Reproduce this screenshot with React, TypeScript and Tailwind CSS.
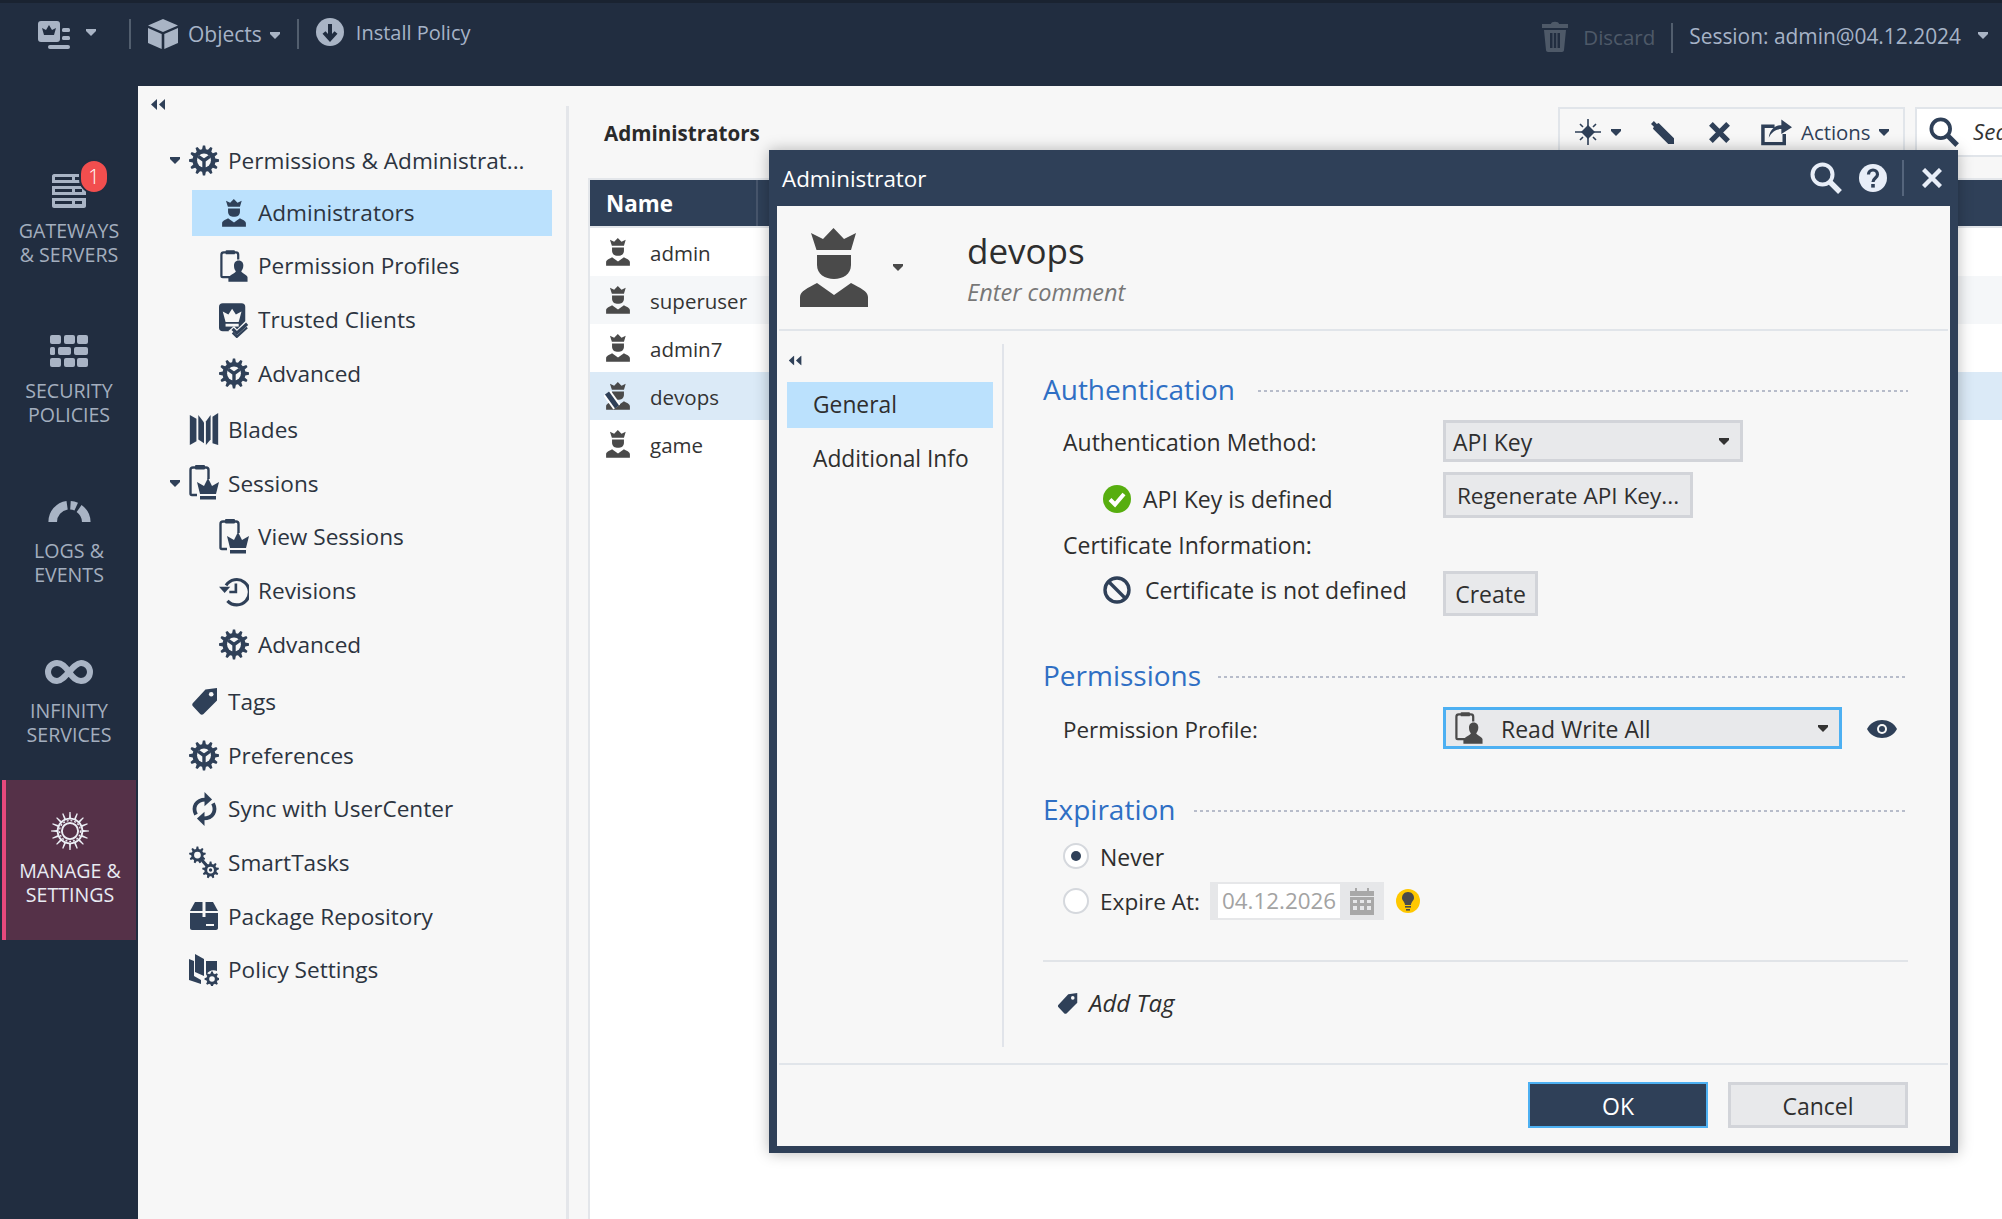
import React from "react";

const NAVY = "#2f4058";

function gearPath(cx: number, cy: number, ro: number, ri: number, n: number, w = 0.32) {
  const pts: string[] = [];
  const step = (Math.PI * 2) / n;
  for (let i = 0; i < n; i++) {
    const a = i * step - Math.PI / 2;
    const p = (r: number, t: number) => `${(cx + r * Math.cos(t)).toFixed(2)} ${(cy + r * Math.sin(t)).toFixed(2)}`;
    pts.push(p(ri, a - step * 0.5), p(ri, a - step * w), p(ro, a - step * w * 0.45), p(ro, a + step * w * 0.45), p(ri, a + step * w));
  }
  return "M" + pts.join("L") + "Z";
}

function Crown({ c = NAVY, className = "" }: { c?: string; className?: string }) {
  return (
    <svg viewBox="0 0 68 80" className={className} fill={c}>
      <path d="M33.5 0 L44 11 L56 5 L51 22 H16.5 L11 5 L23 11 Z" />
      <path d="M17 27 H51 V37 C51 46 43 51 34 51 C25 51 17 46 17 37 Z" />
      <path d="M0 79 V69 C0 63 8 60 17 55 L34 67 L51 55 C60 60 68 63 68 69 V79 Z" />
    </svg>
  );
}

function Gear({ className = "" }: { className?: string }) {
  return (
    <svg viewBox="0 0 32 34" className={className}>
      <path d={gearPath(16, 17, 16, 12.2, 12)} fill={NAVY} />
      <circle cx="16" cy="17" r="7.4" fill="#f7f7f7" />
      <path d="M16 17 L9.8 12.6 M16 17 L22.2 12.6 M16 17 V25" stroke={NAVY} strokeWidth="3.6" fill="none" />
    </svg>
  );
}

function Profile({ c = NAVY, className = "" }: { c?: string; className?: string }) {
  return (
    <svg viewBox="0 0 30 34" className={className}>
      <path d="M11 29 H3 C2 29 1.5 28.4 1.5 27.5 V5 C1.5 3.5 2.5 2.5 4 2.5 H17 C18.5 2.5 19.5 3.5 19.5 5 V10" fill="none" stroke={c} strokeWidth="2.4" />
      <rect x="6" y="0" width="10" height="4.5" rx="1" fill={c} />
      <path d="M20 11 C23.5 11 25 13.5 25 16.5 C25 19 24 21 22.8 22.5 C23 24.5 29 26 29.5 29 V34 H9 V29.5 C10 26.5 16.5 25 17 22.5 C15.5 21 15 19 15 16.5 C15 13.5 16.5 11 20 11 Z" fill={c} />
    </svg>
  );
}

function SessionIcon({ className = "" }: { className?: string }) {
  return (
    <svg viewBox="0 0 30 36" className={className} fill={NAVY}>
      <path d="M8 30 H3 C2 30 1.5 29.4 1.5 28.5 V5 C1.5 3.5 2.5 2.5 4 2.5 H17 C18.5 2.5 19.5 3.5 19.5 5 V14" fill="none" stroke={NAVY} strokeWidth="2.4" />
      <rect x="6" y="0" width="10" height="4.5" rx="1" />
      <path d="M19 13 L23 21 L30 17 L27 29 H11 L8 17 L15 21 Z" />
      <rect x="11" y="31" width="16" height="3.5" />
    </svg>
  );
}

function Trusted({ className = "" }: { className?: string }) {
  return (
    <svg viewBox="0 0 32 36" className={className}>
      <rect x="0" y="0" width="28" height="30" rx="4" fill={NAVY} />
      <path d="M14 6 L18 12 L24 9 L21 20 H7 L4 9 L10 12 Z" fill="#f7f7f7" />
      <rect x="7" y="22" width="14" height="3" fill="#f7f7f7" />
      <path d="M13 27 L19 34 L31 22" fill="none" stroke="#f7f7f7" strokeWidth="8" />
      <path d="M14.5 27.5 L19 32 L30 22" fill="none" stroke={NAVY} strokeWidth="3.4" />
      <path d="M14.5 31.5 L19 36 L30 26" fill="none" stroke={NAVY} strokeWidth="2.4" />
    </svg>
  );
}

function Blades({ className = "" }: { className?: string }) {
  return (
    <svg viewBox="0 0 30 36" className={className} fill={NAVY}>
      <path d="M0 2 L7 6 V30 L0 34 Z" />
      <path d="M9 0 L15 8 V30 L9 26 Z" transform="translate(0 2)" />
      <path d="M17 9 L22 2 V28 L17 34 Z" />
      <path d="M24 4 L30 0 V34 L24 32 Z" />
    </svg>
  );
}

function Revisions({ className = "" }: { className?: string }) {
  return (
    <svg viewBox="0 0 32 32" className={className} fill="none" stroke={NAVY}>
      <path d="M7.5 10 A13.5 13.5 0 1 1 9 26.5" strokeWidth="3.4" />
      <path d="M0 12.5 H12 L6 19 Z" fill={NAVY} stroke="none" transform="translate(0 -1)" />
      <path d="M18 8 V17 H11" strokeWidth="2.8" />
    </svg>
  );
}

function Tag({ c = NAVY, className = "" }: { c?: string; className?: string }) {
  return (
    <svg viewBox="0 0 26 28" className={className}>
      <path d="M26 0 V13 L12 27 C11 28 9.5 28 8.5 27 L1 19 C0 18 0 16.5 1 15.5 L14 1.5 Z" fill={c} />
      <circle cx="20" cy="6.5" r="2.4" fill="#f7f7f7" />
    </svg>
  );
}

function SyncIcon({ className = "" }: { className?: string }) {
  return (
    <svg viewBox="0 0 26 36" className={className} fill="none" stroke={NAVY} strokeWidth="4">
      <path d="M4 24 C0 16 4 8 14 8" />
      <path d="M22 12 C26 20 22 28 12 28" />
      <path d="M13 0 L21 8 L13 15 Z" fill={NAVY} stroke="none" />
      <path d="M13 21 L5 28 L13 36 Z" fill={NAVY} stroke="none" />
    </svg>
  );
}

function SmartTasks({ className = "" }: { className?: string }) {
  return (
    <svg viewBox="0 0 32 34" className={className}>
      <path d="M9 9 L23 25" stroke={NAVY} strokeWidth="3.4" />
      <path d={gearPath(9, 9, 9, 6.6, 9)} fill={NAVY} />
      <circle cx="9" cy="9" r="3.6" fill="#f7f7f7" />
      <path d={gearPath(23, 25, 9, 6.6, 9)} fill={NAVY} />
      <circle cx="23" cy="25" r="3.6" fill="#f7f7f7" />
      <circle cx="23" cy="25" r="1.8" fill={NAVY} />
    </svg>
  );
}

function PackageIcon({ className = "" }: { className?: string }) {
  return (
    <svg viewBox="0 0 28 28" className={className} fill={NAVY}>
      <path d="M5 0 H12.5 V9 H0 Z" />
      <path d="M15.5 0 H23 L28 9 H15.5 Z" />
      <path d="M0 11 H12.5 V15 H15.5 V11 H28 V26 C28 27 27 28 26 28 H2 C1 28 0 27 0 26 Z" />
      <rect x="16" y="22" width="8" height="2" fill="#f7f7f7" />
    </svg>
  );
}

function PolicySettings({ className = "" }: { className?: string }) {
  return (
    <svg viewBox="0 0 30 32" className={className} fill={NAVY}>
      <path d="M0 5 L5 7 V22 L12 26 V30 L0 26 Z" />
      <path d="M6 0 L15 5 V22 L6 18 Z" />
      <path d="M17 7 H28 V17 C24 15 19 17 17 21 Z" />
      <path d={gearPath(23, 25, 7.5, 5.6, 8)} />
      <circle cx="23" cy="25" r="2.8" fill="#f7f7f7" />
    </svg>
  );
}

function Caret({ c = NAVY, className = "" }: { c?: string; className?: string }) {
  return (
    <svg viewBox="0 0 10 7" className={`w-[10px] h-[7px] shrink-0 ${className}`} fill={c}>
      <path d="M0 0 H10 V2 L5 7 L0 2 Z" />
    </svg>
  );
}

function Collapse({ className = "" }: { className?: string }) {
  return (
    <svg viewBox="0 0 15 11" className={`w-[15px] h-[11px] ${className}`} fill={NAVY}>
      <path d="M6 0 V11 L0 5.5 Z" />
      <path d="M14 0 V11 L8 5.5 Z" />
    </svg>
  );
}

function SearchIcon({ c, className = "" }: { c: string; className?: string }) {
  return (
    <svg viewBox="0 0 32 32" className={className} fill="none" stroke={c}>
      <circle cx="12.5" cy="12.5" r="10" strokeWidth="4" />
      <path d="M19.5 19.5 L30 30" strokeWidth="5.4" />
    </svg>
  );
}

function TreeRow({ level = 1, icon, label, caret = false, selected = false }: { level?: 1 | 2; icon: React.ReactNode; label: string; caret?: boolean; selected?: boolean }) {
  return (
    <div className={`h-[53.7px] flex items-center ${level === 2 ? "pl-[54px]" : "pl-[32px]"}`}>
      <div className={`flex items-center h-[46px] ${level === 2 ? (selected ? "w-[360px] bg-[#bbe1fd] pl-[27px]" : "pl-[27px]") : ""}`}>
        {level === 1 && <div className="w-[19px] flex">{caret && <Caret />}</div>}
        <div className="w-[30px] h-[36px] flex items-center justify-center shrink-0">{icon}</div>
        <span className="ml-[9px] pt-[1px] text-[#2c3440] text-[22.6px] whitespace-nowrap">{label}</span>
      </div>
    </div>
  );
}

function SideItem({ icon, lines, active = false }: { icon: React.ReactNode; lines: [string, string]; active?: boolean }) {
  return (
    <div className={`h-[160px] flex flex-col items-center pt-[22px] text-[19.6px] leading-[24px] ${active ? "ml-[2px] mr-[2px] border-l-4 border-[#e6497c] bg-[#553148] text-[#e8ebf3] pr-[2px]" : "text-[#a3aebe]"}`}>
      <div className="h-[57px] flex items-center justify-center">{icon}</div>
      <div className="text-center whitespace-nowrap">{lines[0]}</div>
      <div className="text-center whitespace-nowrap">{lines[1]}</div>
    </div>
  );
}

function Heading({ title, lineLeft }: { title: string; lineLeft: number }) {
  return (
    <div className="h-[46px] flex items-center">
      <span className="text-[#2f6fc4] text-[28px] pb-[3px] whitespace-nowrap" style={{ width: lineLeft }}>{title}</span>
      <div className="flex-1 h-[2px] mt-[2px] bg-[repeating-linear-gradient(90deg,#b7bcca_0_3px,transparent_3px_6px)]" />
    </div>
  );
}

function Btn({ children, className = "" }: { children: React.ReactNode; className?: string }) {
  return (
    <div className={`border-[3px] border-[#d2d4d9] bg-[#e8e9eb] flex items-center justify-center text-[#2f2f2f] whitespace-nowrap ${className}`}>{children}</div>
  );
}

const rows = [
  { n: "admin", bg: "bg-white" },
  { n: "superuser", bg: "bg-[#f5f7f9]" },
  { n: "admin7", bg: "bg-white" },
  { n: "devops", bg: "bg-[#dbeaf7]", pencil: true },
  { n: "game", bg: "bg-white" },
];

export default function App() {
  return (
    <div className="relative w-[2002px] h-[1219px] overflow-hidden bg-[#212d40] text-[22.4px] leading-none" style={{ fontFamily: '"Open Sans", "Noto Sans", sans-serif' }}>
      {/* top bar */}
      <header className="h-[86px] border-t-[3px] border-[#1a2331] flex text-[#a6b3c7] text-[20.5px]">
        <div className="flex items-start pt-[16px] pl-[38px]">
          <svg viewBox="0 0 32 28" className="w-[32px] h-[28px] mt-[2px]" fill="#a9b4c5">
            <rect x="0" y="0" width="22" height="21" rx="3" />
            <path d="M11 4 L14 9 L18 7 L16 14 H6 L4 7 L8 9 Z" fill="#212d40" />
            <rect x="24" y="7" width="8" height="4" rx="1.5" />
            <rect x="24" y="15" width="8" height="4" rx="1.5" />
            <rect x="10" y="24" width="22" height="4" rx="2" />
          </svg>
          <Caret c="#a9b4c5" className="ml-[16px] mt-[10px]" />
          <div className="w-[2px] h-[30px] bg-[#525e6e] ml-[33px]" />
          <svg viewBox="0 0 30 30" className="w-[30px] h-[30px] ml-[17px]" fill="#a9b4c5">
            <path d="M15 0 L30 6.5 L15 13 L0 6.5 Z" />
            <path d="M0 9 L13.7 15 V30 L0 24 Z" />
            <path d="M30 9 L16.3 15 V30 L30 24 Z" />
          </svg>
          <span className="ml-[10px] mt-[5px] text-[21px]">Objects</span>
          <Caret c="#a9b4c5" className="ml-[8px] mt-[13px]" />
          <div className="w-[2px] h-[30px] bg-[#525e6e] ml-[17px]" />
          <svg viewBox="0 0 28 28" className="w-[28px] h-[28px] ml-[17px] -mt-[1px]">
            <circle cx="14" cy="14" r="14" fill="#a9b4c5" />
            <path d="M14 6 V20 M8 14.5 L14 21 L20 14.5" stroke="#212d40" strokeWidth="4" fill="none" />
          </svg>
          <span className="ml-[12px] mt-[4px] text-[20px]">Install Policy</span>
        </div>
        <div className="ml-auto flex items-start pt-[17px]">
          <svg viewBox="0 0 26 32" className="w-[26px] h-[32px]" fill="#4e5968">
            <path d="M9 4 C9 1 17 1 17 4 H26 V8 H0 V4 Z" />
            <path d="M2 10 H24 L22 30 C22 31 21 32 20 32 H6 C5 32 4 31 4 30 Z M8 13 V28 H10.5 V13 Z M11.8 13 V28 H14.2 V13 Z M15.5 13 V28 H18 V13 Z" fillRule="evenodd" />
          </svg>
          <span className="ml-[15px] mt-[7px] text-[#4e5968]">Discard</span>
          <div className="w-[2px] h-[30px] bg-[#525e6e] ml-[16px] mt-[3px]" />
          <span className="ml-[16px] mt-[6px] text-[20.9px] text-[#a6b3c7]">Session: admin@04.12.2024</span>
          <Caret c="#a9b4c5" className="ml-[17px] mt-[12px] mr-[14px]" />
        </div>
      </header>

      <div className="flex h-[1133px]">
        {/* sidebar */}
        <aside className="w-[138px] shrink-0 pt-[54px]">
          <div className="relative">
            <SideItem
              lines={["GATEWAYS", "& SERVERS"]}
              icon={
                <svg viewBox="0 0 34 34" className="w-[34px] h-[34px]" fill="#a9b4c5">
                  <path fillRule="evenodd" d="M0 2 C0 1 1 0 2 0 H32 C33 0 34 1 34 2 V9 H0 Z M3 3 V6 H20 V3 Z M23 3 V6 H30 V3 Z" />
                  <path fillRule="evenodd" d="M0 12 H34 V21 H0 Z M3 15 V18 H20 V15 Z M23 15 V18 H30 V15 Z" />
                  <path fillRule="evenodd" d="M0 24 H34 V32 C34 33 33 34 32 34 H2 C1 34 0 33 0 32 Z M3 27 V30 H20 V27 Z M23 27 V30 H30 V27 Z" />
                </svg>
              }
            />
            <div className="absolute left-[79px] top-[19px] w-[30px] h-[35px] rounded-full bg-[#f24e4e] border-2 border-[#212d40] flex items-center justify-center text-white text-[20px] font-light">1</div>
          </div>
          <SideItem
            lines={["SECURITY", "POLICIES"]}
            icon={
              <svg viewBox="0 0 38 32" className="w-[38px] h-[32px]" fill="#a9b4c5">
                <rect x="0" y="0" width="11" height="9" rx="2" /><rect x="14" y="0" width="11" height="9" rx="2" /><rect x="27" y="0" width="11" height="9" rx="2" />
                <rect x="0" y="12" width="5" height="8" rx="1.5" /><rect x="8" y="12" width="13" height="8" rx="2" /><rect x="24" y="12" width="14" height="8" rx="2" />
                <rect x="0" y="23" width="11" height="9" rx="2" /><rect x="14" y="23" width="11" height="9" rx="2" /><rect x="27" y="23" width="11" height="9" rx="2" />
              </svg>
            }
          />
          <SideItem
            lines={["LOGS &", "EVENTS"]}
            icon={
              <svg viewBox="0 0 44 24" className="w-[43px] h-[23px]" fill="none" stroke="#a9b4c5" strokeWidth="9">
                <path d="M4.5 24 A17.5 17.5 0 0 1 19.5 6.5" />
                <path d="M23 6.5 A17.5 17.5 0 0 1 29 8" />
                <path d="M32 10 A17.5 17.5 0 0 1 39.5 24" />
              </svg>
            }
          />
          <SideItem
            lines={["INFINITY", "SERVICES"]}
            icon={
              <svg viewBox="0 0 48 24" className="w-[48px] h-[24px] mt-[3px]" fill="none" stroke="#a9b4c5" strokeWidth="6">
                <path d="M24 12 C20 6 17 3 12 3 C7 3 3 7 3 12 C3 17 7 21 12 21 C20 21 28 3 36 3 C41 3 45 7 45 12 C45 17 41 21 36 21 C31 21 28 18 24 12 Z" />
              </svg>
            }
          />
          <SideItem
            active
            lines={["MANAGE &", "SETTINGS"]}
            icon={
              <svg viewBox="0 0 40 40" className="w-[38px] h-[38px]">
                <path d={gearPath(20, 20, 20, 14, 16, 0.18)} fill="#eceff6" />
                <circle cx="20" cy="20" r="12" fill="#553148" />
                <circle cx="20" cy="20" r="8.5" fill="none" stroke="#eceff6" strokeWidth="2" />
                <circle cx="20" cy="20" r="11" fill="none" stroke="#eceff6" strokeWidth="1.4" strokeDasharray="2 2" />
              </svg>
            }
          />
        </aside>

        {/* content */}
        <main className="flex-1 bg-[#f7f7f7] pt-[20px] flex min-w-0">
          {/* tree */}
          <nav className="w-[431px] shrink-0 border-r-[3px] border-[#e4e6ea]">
            <div className="h-[28px] -mt-[16px] mb-[16px] pl-[13px] flex items-center"><Collapse /></div>
            <TreeRow caret icon={<Gear className="w-[30px] h-[33px]" />} label="Permissions & Administrat..." />
            <div className="-mt-[2px]" />
            <TreeRow level={2} selected icon={<Crown className="w-[24px] h-[28px]" />} label="Administrators" />
            <TreeRow level={2} icon={<Profile className="w-[28px] h-[34px]" />} label="Permission Profiles" />
            <TreeRow level={2} icon={<Trusted className="w-[32px] h-[36px]" />} label="Trusted Clients" />
            <TreeRow level={2} icon={<Gear className="w-[30px] h-[33px]" />} label="Advanced" />
            <div className="h-[2.5px]" />
            <TreeRow icon={<Blades className="w-[30px] h-[34px]" />} label="Blades" />
            <TreeRow caret icon={<SessionIcon className="w-[30px] h-[36px]" />} label="Sessions" />
            <TreeRow level={2} icon={<SessionIcon className="w-[30px] h-[36px]" />} label="View Sessions" />
            <TreeRow level={2} icon={<Revisions className="w-[32px] h-[32px]" />} label="Revisions" />
            <TreeRow level={2} icon={<Gear className="w-[30px] h-[33px]" />} label="Advanced" />
            <div className="h-[3.5px]" />
            <TreeRow icon={<Tag className="w-[25px] h-[27px]" />} label="Tags" />
            <TreeRow icon={<Gear className="w-[30px] h-[33px]" />} label="Preferences" />
            <TreeRow icon={<SyncIcon className="w-[25px] h-[34px]" />} label="Sync with UserCenter" />
            <TreeRow icon={<SmartTasks className="w-[31px] h-[33px]" />} label="SmartTasks" />
            <TreeRow icon={<PackageIcon className="w-[28px] h-[28px]" />} label="Package Repository" />
            <TreeRow icon={<PolicySettings className="w-[30px] h-[32px]" />} label="Policy Settings" />
          </nav>

          {/* list */}
          <section className="flex-1 min-w-0 flex flex-col pl-[19px]">
            <div className="h-[72px] flex items-start pt-[1px]">
              <span className="ml-[16px] mt-[16px] font-bold text-[#2a2a2a] text-[20.6px]">Administrators</span>
              <div className="ml-auto flex items-start">
                <div className="w-[347px] h-[50px] border-2 border-[#e1e5ea] flex items-center pl-[15px] text-[#2f4058]">
                  <svg viewBox="0 0 26 26" className="w-[26px] h-[26px]" fill={NAVY} stroke={NAVY}>
                    <path d="M13 0 V26 M0 13 H26" strokeWidth="1.6" />
                    <path d="M5 5 L8 8 M21 5 L18 8 M5 21 L8 18 M21 21 L18 18" strokeWidth="1.6" />
                    <path d="M13 6 L20 13 L13 20 L6 13 Z" stroke="none" />
                  </svg>
                  <Caret className="ml-[10px]" />
                  <svg viewBox="0 0 24 24" className="w-[23px] h-[23px] ml-[30px]" fill={NAVY}>
                    <path d="M3 0 L6 3 L8 2 L24 18 V24 H18 L2 8 L3 6 L0 3 Z" />
                  </svg>
                  <svg viewBox="0 0 22 22" className="w-[21px] h-[21px] ml-[35px]" fill="none" stroke={NAVY} strokeWidth="5.5">
                    <path d="M2 2 L20 20 M20 2 L2 20" />
                  </svg>
                  <svg viewBox="0 0 32 28" className="w-[31px] h-[28px] ml-[31px]" fill="none" stroke={NAVY}>
                    <path d="M14 8 H2 V26 H24 V16" strokeWidth="3.6" />
                    <path d="M8 20 C9 11 15 7 21 7 V1 L32 9 L21 16 V11 C15 11 11 14 8 20 Z" fill={NAVY} stroke="none" />
                  </svg>
                  <span className="ml-[9px] text-[20.4px]">Actions</span>
                  <Caret className="ml-[8px]" />
                </div>
                <div className="w-[87px] h-[50px] ml-[10px] bg-white border-2 border-r-0 border-[#e1e5ea] flex items-center pl-[12px] overflow-hidden">
                  <SearchIcon c={NAVY} className="w-[30px] h-[30px] shrink-0" />
                  <span className="ml-[14px] italic text-[#333]">Search</span>
                </div>
              </div>
            </div>
            <div className="flex-1 border-l-2 border-t-2 border-[#e3e6ea] bg-white flex flex-col">
              <div className="h-[46px] bg-[#2f4058] flex items-center border-b-0">
                <div className="w-[168px] h-full border-r-2 border-[#47566c] flex items-center pl-[16px] pt-[3px] text-white font-bold">Name</div>
              </div>
              <div className="h-[2px] bg-[#e3e6ea]" />
              {rows.map((r) => (
                <div key={r.n} className={`h-[48px] flex items-center pl-[16px] ${r.bg}`}>
                  <div className="relative w-[24px] h-[28px]">
                    <Crown c="#4a4a4a" className="w-[24px] h-[28px]" />
                    {r.pencil && (
                      <svg viewBox="0 0 16 20" className="absolute left-[-2px] top-[8px] w-[16px] h-[20px]">
                        <path d="M3 3 L13 17" stroke="#ffffff" strokeWidth="9" />
                        <path d="M3 3 L13 17" stroke={NAVY} strokeWidth="5" />
                      </svg>
                    )}
                  </div>
                  <span className="ml-[20px] pt-[3px] text-[#333] text-[20.5px]">{r.n}</span>
                </div>
              ))}
            </div>
          </section>
        </main>
      </div>

      {/* dialog */}
      <div className="absolute left-[769px] top-[150px] w-[1189px] h-[1003px] bg-[#2f4058] flex flex-col px-[8px] pb-[7px] shadow-[0_0_14px_rgba(0,0,0,0.28)]">
        <div className="h-[56px] shrink-0 flex items-center pl-[5px] text-white">
          <span className="pt-[3px]">Administrator</span>
          <SearchIcon c="#e8eef8" className="ml-auto w-[32px] h-[32px]" />
          <svg viewBox="0 0 28 28" className="w-[28px] h-[28px] ml-[17px]">
            <circle cx="14" cy="14" r="14" fill="#e8eef8" />
            <path d="M9.5 10.5 C9.5 4.5 18.5 4.5 18.5 10.5 C18.5 14 14 14 14 18" fill="none" stroke={NAVY} strokeWidth="3.2" />
            <rect x="12.2" y="20" width="3.6" height="3.6" fill={NAVY} />
          </svg>
          <div className="w-[2px] h-[36px] bg-[#55657c] ml-[15px]" />
          <svg viewBox="0 0 20 20" className="w-[20px] h-[20px] ml-[18px] mr-[8px]" fill="none" stroke="#e8eef8" strokeWidth="4.4">
            <path d="M1.5 1.5 L18.5 18.5 M18.5 1.5 L1.5 18.5" />
          </svg>
        </div>
        <div className="flex-1 bg-[#f7f7f7] flex flex-col text-[#2e2e2e] text-[23px] min-h-0">
          {/* header */}
          <div className="h-[123px] shrink-0 flex items-start pl-[23px] pt-[22px]">
            <Crown c="#4a4a4a" className="w-[68px] h-[80px]" />
            <Caret c="#4a4a4a" className="ml-[25px] mt-[36px]" />
            <div className="ml-[64px]">
              <div className="text-[35px] leading-[44px] text-[#2e2e2e] mt-[1px]">devops</div>
              <div className="italic text-[#777] text-[23.5px] mt-[8px]">Enter comment</div>
            </div>
          </div>
          <div className="h-[2px] mx-[2px] bg-[#e1e5ea] shrink-0" />
          {/* body */}
          <div className="h-[732px] shrink-0 flex pt-[13px] pb-[16px]">
            <div className="w-[227px] shrink-0 border-r-2 border-[#e1e4ea] pl-[10px] text-[22.8px]">
              <div className="h-[32px] flex items-center pl-[1px]"><Collapse className="scale-90" /></div>
              <div className="h-[6px]" />
              <div className="w-[206px] h-[46px] bg-[#bbe1fd] flex items-center pl-[26px] pt-[1px]">General</div>
              <div className="w-[206px] h-[46px] mt-[8px] flex items-center pl-[26px] pt-[1px]">Additional Info</div>
            </div>
            <div className="w-[865px] ml-[39px] shrink-0">
              <div className="h-[23px]" />
              <Heading title="Authentication" lineLeft={215} />
              <div className="mt-[7px] h-[42px] flex items-center">
                <span className="w-[400px] pl-[20px] pt-[2px]">Authentication Method:</span>
                <Btn className="w-[300px] h-[42px] !justify-between pl-[7px] pr-[11px]"><span className="pt-[2px]">API Key</span><Caret c="#333" /></Btn>
              </div>
              <div className="mt-[10px] h-[46px] flex items-center">
                <div className="w-[400px] pl-[60px] pt-[8px] flex items-center">
                  <svg viewBox="0 0 28 28" className="w-[28px] h-[28px]">
                    <circle cx="14" cy="14" r="14" fill="#57ae0f" />
                    <path d="M7 14.5 L12 19.5 L21 9" fill="none" stroke="#fff" strokeWidth="4" />
                  </svg>
                  <span className="ml-[12px]">API Key is defined</span>
                </div>
                <Btn className="w-[250px] h-[46px] text-[22.6px] pt-[3px]">Regenerate API Key...</Btn>
              </div>
              <div className="mt-[7px] h-[40px] flex items-center pl-[20px]">Certificate Information:</div>
              <div className="mt-[6px] h-[45px] flex items-center">
                <div className="w-[400px] pl-[60px] pb-[7px] flex items-center">
                  <svg viewBox="0 0 28 28" className="w-[28px] h-[28px]" fill="none" stroke="#2f4058" strokeWidth="3.4">
                    <circle cx="14" cy="14" r="12" />
                    <path d="M5.5 5.5 L22.5 22.5" />
                  </svg>
                  <span className="ml-[14px]">Certificate is not defined</span>
                </div>
                <Btn className="w-[95px] h-[45px] pt-[2px]">Create</Btn>
              </div>

              <div className="h-[37px]" />
              <Heading title="Permissions" lineLeft={175} />
              <div className="mt-[8px] h-[42px] flex items-center">
                <span className="w-[400px] pl-[20px] pt-[4px] text-[22.4px]">Permission Profile:</span>
                <div className="w-[399px] h-[42px] border-[3px] border-[#4db0f2] bg-[#e8e9eb] flex items-center pl-[9px] pr-[11px]">
                  <Profile c="#4a4a4a" className="w-[28px] h-[34px]" />
                  <span className="ml-[18px] pt-[2px]">Read Write All</span>
                  <Caret c="#333" className="ml-auto" />
                </div>
                <svg viewBox="0 0 30 18" className="w-[30px] h-[18px] ml-[25px] mt-[1px]">
                  <path d="M0 9 C6 -3 24 -3 30 9 C24 21 6 21 0 9 Z" fill={NAVY} />
                  <circle cx="15" cy="9" r="5" fill="#f7f7f7" />
                  <circle cx="15" cy="9" r="3" fill={NAVY} />
                </svg>
              </div>

              <div className="h-[38px]" />
              <Heading title="Expiration" lineLeft={151} />
              <div className="mt-[5px] h-[36px] flex items-center pl-[20px]">
                <div className="w-[26px] h-[26px] rounded-full border-2 border-[#d5d8dd] bg-white flex items-center justify-center">
                  <div className="w-[10px] h-[10px] rounded-full bg-[#2f4058]" />
                </div>
                <span className="ml-[11px] mt-[2px]">Never</span>
              </div>
              <div className="mt-[8px] h-[38px] flex items-center pl-[20px]">
                <div className="w-[26px] h-[26px] rounded-full border-2 border-[#d5d8dd] bg-white" />
                <span className="ml-[11px] mt-[2px] w-[110px] text-[22.6px] whitespace-nowrap">Expire At:</span>
                <div className="w-[174px] h-[38px] bg-[#e6e7e9] flex items-center pl-[8px]">
                  <div className="w-[122px] h-[34px] bg-white flex items-center justify-center text-[#a3a3a3] text-[22.4px]">04.12.2026</div>
                  <svg viewBox="0 0 24 27" className="w-[24px] h-[27px] ml-[10px]" fill="#a8a8a8">
                    <path fillRule="evenodd" d="M0 3 H5 V0 H7 V3 H17 V0 H19 V3 H24 V27 H0 Z M0 8 V9 H24 V8 Z M3 12 V15 H7 V12 Z M10 12 V15 H14 V12 Z M17 12 V15 H21 V12 Z M3 18 V22 H7 V18 Z M10 18 V22 H14 V18 Z M17 18 V22 H21 V18 Z" />
                  </svg>
                </div>
                <svg viewBox="0 0 24 24" className="w-[24px] h-[24px] ml-[12px]">
                  <circle cx="12" cy="12" r="12" fill="#ffc800" />
                  <path d="M12 3 C16 3 18 6 18 9 C18 11.5 15 13 15 16 H9 C9 13 6 11.5 6 9 C6 6 8 3 12 3 Z" fill="#4a4a4a" />
                  <rect x="9" y="17" width="6" height="1.6" fill="#4a4a4a" />
                  <rect x="10" y="20" width="4" height="1.6" fill="#4a4a4a" />
                </svg>
              </div>
              <div className="mt-[40px] h-[2px] bg-[#e1e4e8]" />
              <div className="mt-[21px] h-[40px] flex items-center pl-[14px] italic text-[24px]">
                <Tag className="w-[21px] h-[21px]" />
                <span className="ml-[11px]">Add Tag</span>
              </div>
            </div>
          </div>
          <div className="h-[2px] mx-[2px] bg-[#e1e5ea] shrink-0" />
          <div className="flex-1 flex justify-end items-start pt-[17px] pr-[42px]">
            <div className="w-[180px] h-[46px] border-[2px] border-[#4db0f2] bg-[#2f4058] text-white flex items-center justify-center pt-[2px]">OK</div>
            <Btn className="w-[180px] h-[46px] ml-[20px] pt-[2px]">Cancel</Btn>
          </div>
        </div>
      </div>
    </div>
  );
}
